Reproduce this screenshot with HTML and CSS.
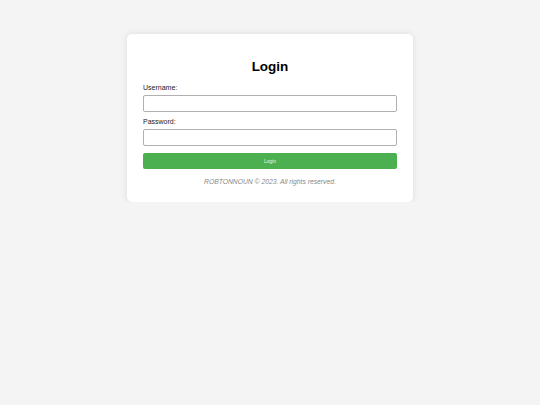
FILE: index.html
```html
<!DOCTYPE html>
<html lang="en">
<head>
<meta charset="utf-8">
<title>Login</title>
<link rel="stylesheet" href="styles.css">
</head>
<body>
<main class="page">
  <div class="card">
    <h2 class="title">Login</h2>
    <form class="form">
      <label class="label" for="username">Username:</label>
      <input class="input" type="text" id="username">
      <label class="label label-second" for="password">Password:</label>
      <input class="input" type="password" id="password">
      <button class="button" type="button">Login</button>
    </form>
    <p class="footer">ROBTONNOUN © 2023. All rights reserved.</p>
  </div>
</main>
</body>
</html>
```
FILE: styles.css
```css
html, body {
  margin: 0;
  padding: 0;
  background: #f4f4f4;
  font-family: "Liberation Sans", Arial, sans-serif;
}
.page {
  display: flex;
  justify-content: center;
  padding-top: 34px;
}
.card {
  width: 254px;
  padding: 16px;
  background: #fff;
  border-radius: 5px;
  box-shadow: 0 0 6px rgba(0, 0, 0, 0.1);
}
.title {
  margin: 9px 0 10.2px;
  text-align: center;
  font-size: 13.5px;
  font-weight: bold;
  color: #000;
}
.form {
  display: flex;
  flex-direction: column;
}
.label {
  display: block;
  font-size: 7px;
  line-height: 8px;
  color: #222;
  margin-bottom: 3.3px;
}
.label-second {
  margin-top: 6px;
}
.input {
  box-sizing: border-box;
  width: 100%;
  height: 16.5px;
  margin: 0;
  border: 1px solid #b0b0b0;
  border-radius: 2px;
  background: #fff;
  padding: 0 4px;
}
.button {
  margin-top: 7.5px;
  height: 16px;
  width: 100%;
  border: none;
  border-radius: 2px;
  background: #4caf50;
  color: #e8f5e8;
  font-family: "Liberation Sans", Arial, sans-serif;
  font-size: 5px;
  padding: 0;
}
.footer {
  margin: 8.5px 0 0;
  text-align: center;
  font-style: italic;
  font-size: 6.75px;
  line-height: 8px;
  color: #888;
}
```
